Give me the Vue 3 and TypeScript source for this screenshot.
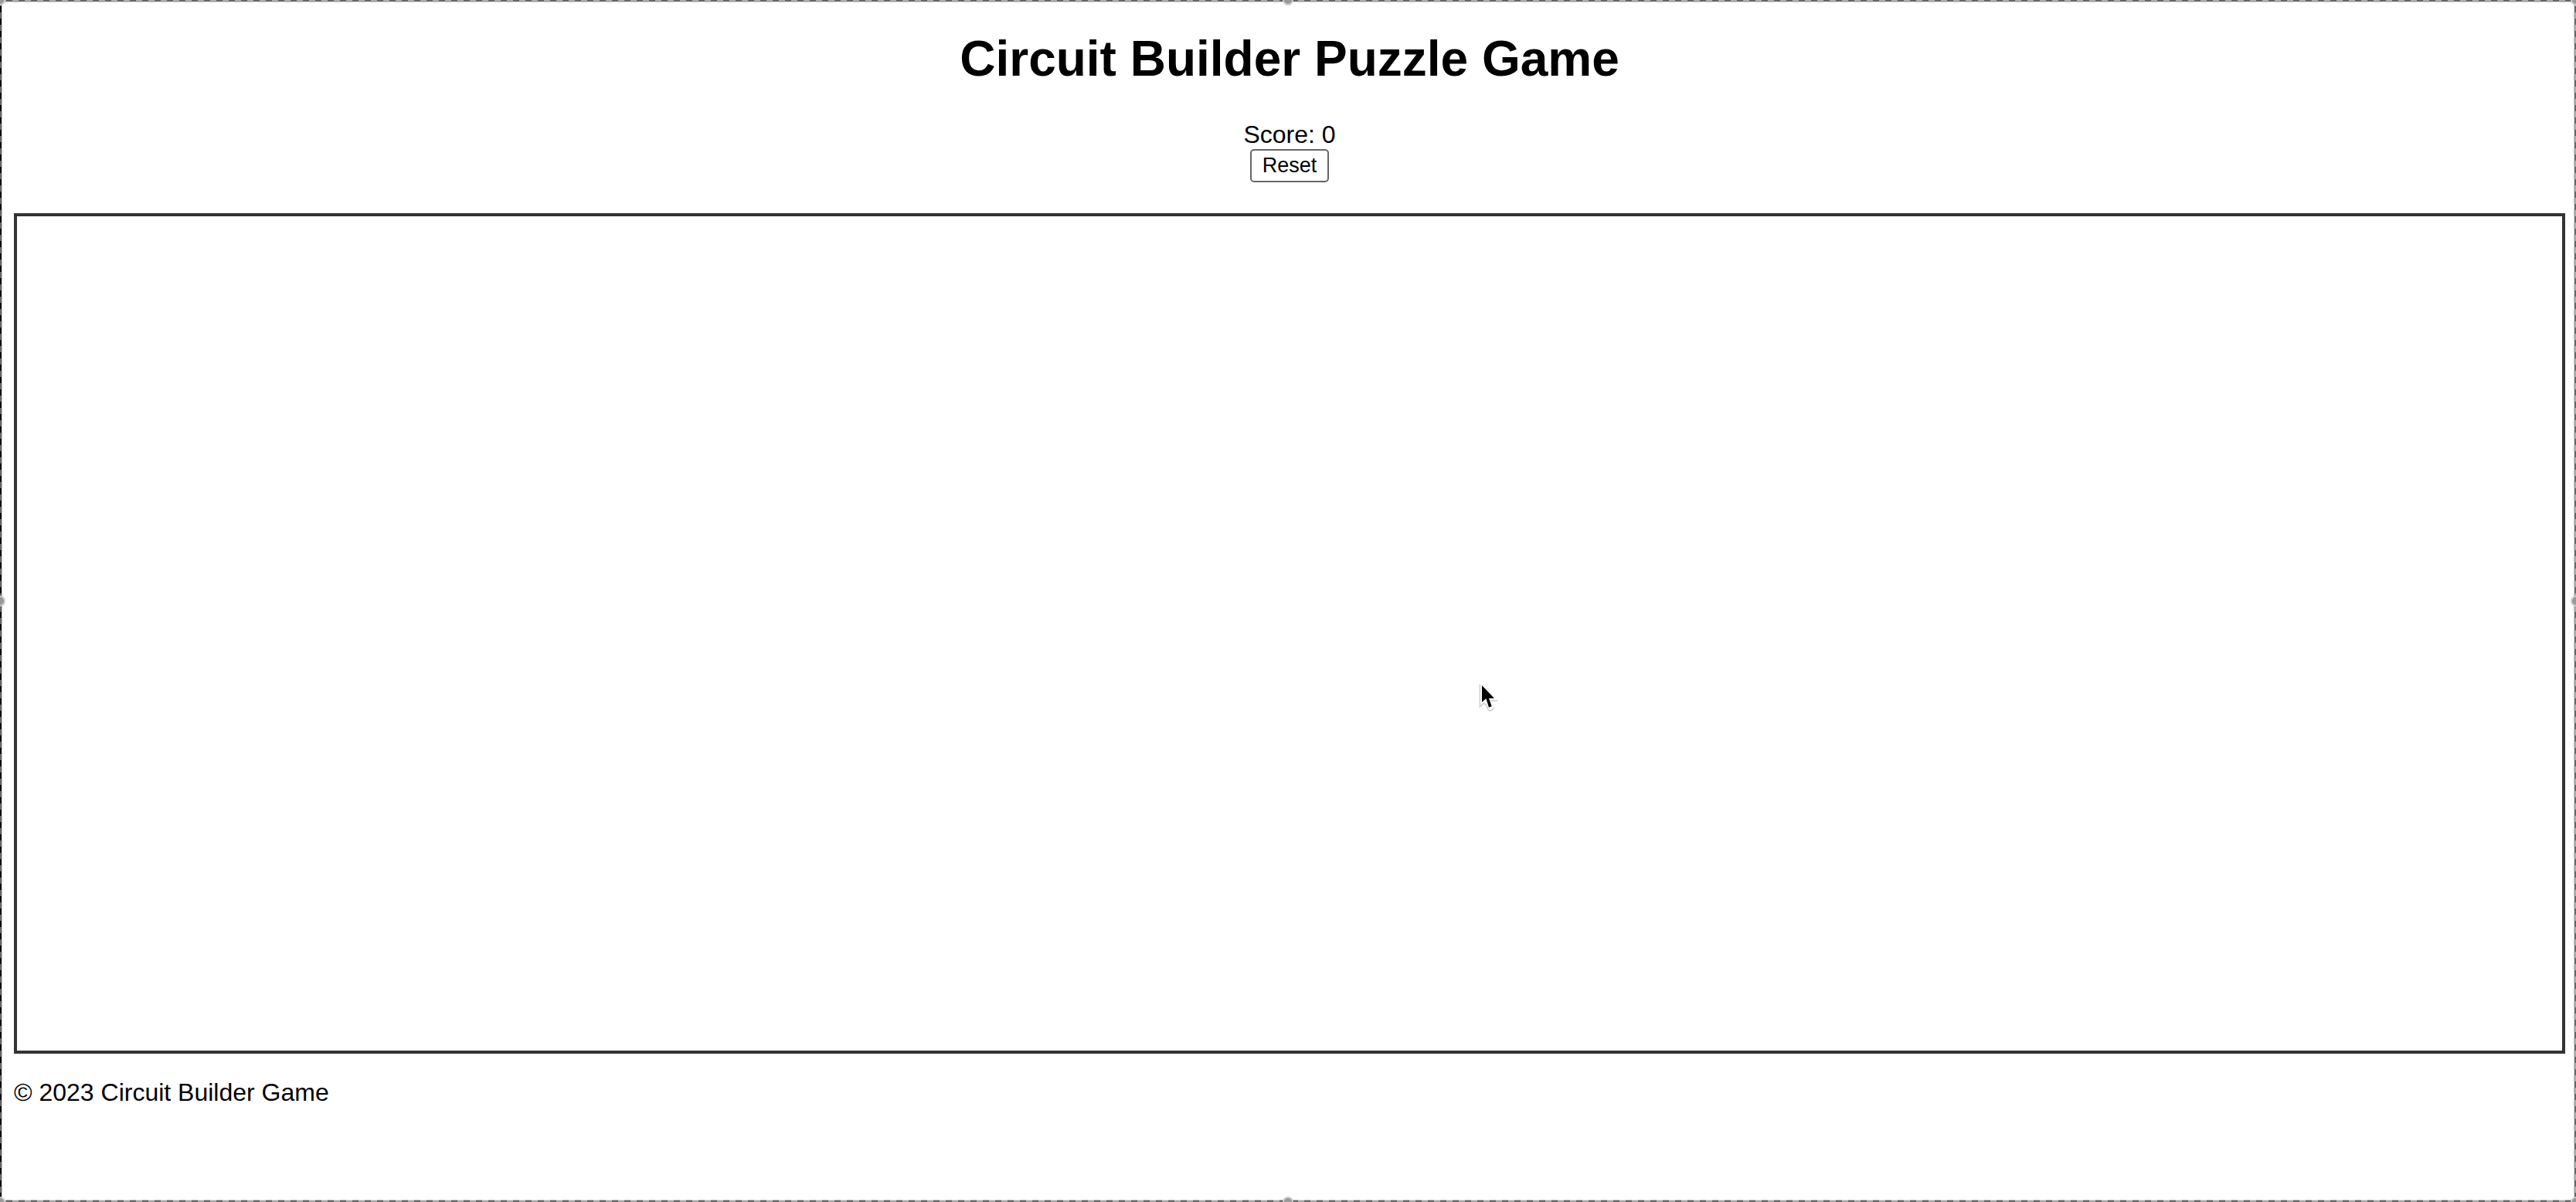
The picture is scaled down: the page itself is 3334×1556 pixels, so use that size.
<script setup lang="ts">
import { ref } from 'vue'

const score = ref<number>(0)
const edges: string[] = ['top', 'bottom', 'left', 'right']
const handles: string[] = ['nw', 'n', 'ne', 'w', 'e', 'sw', 's', 'se']

function reset(): void {
  score.value = 0
}
</script>

<template>
  <div class="page">
    <header class="header">
      <h1 class="title">Circuit Builder Puzzle Game</h1>
      <div class="score">Score: {{ score }}</div>
      <button class="reset" type="button" @click="reset">Reset</button>
    </header>
    <main class="board">
      <svg class="pointer" viewBox="72 42 81 114" aria-hidden="true">
        <path
          d="M79 48V134L95 121L103 127L111 145Q114 151 121 150Q129 149 133 138M120 112L147 111"
          fill="none"
          stroke="#d0d0d0"
          stroke-width="5"
        />
        <path d="M87 52V117L103 103L114 137L125 133L114 102H135Z" fill="#000" />
      </svg>
    </main>
    <footer class="footer">© 2023 Circuit Builder Game</footer>
    <div class="selection" aria-hidden="true">
      <span v-for="edge in edges" :key="edge" class="edge" :class="edge"></span>
      <span v-for="handle in handles" :key="handle" class="handle" :class="handle"></span>
    </div>
  </div>
</template>

<style>
body {
  margin: 0;
  background: #fff;
}
</style>

<style scoped>
.page {
  position: relative;
  box-sizing: border-box;
  display: flex;
  flex-direction: column;
  min-height: 100vh;
  padding: 39px 14px 123px 18px;
  font-family: "Liberation Sans", Arial, sans-serif;
  font-size: 32px;
  line-height: 37px;
  color: #000;
}

.header {
  display: flex;
  flex-direction: column;
  align-items: center;
}

.title {
  margin: 0 0 43px;
  font-size: 64px;
  line-height: 74px;
  font-weight: bold;
}

.reset {
  box-sizing: border-box;
  height: 43px;
  padding: 0 14px;
  border: 2px solid #666;
  border-radius: 5px;
  background: #fff;
  color: #000;
  font-family: inherit;
  font-size: 27px;
  line-height: 37px;
}

.board {
  position: relative;
  flex: 1;
  min-height: 400px;
  margin: 40px 0 32px;
  border: 4px solid #333;
}

.pointer {
  position: absolute;
  top: 55.9%;
  left: 57.4%;
  width: 27px;
  height: 38px;
}

.selection {
  position: absolute;
  inset: 0;
  overflow: hidden;
  pointer-events: none;
}

.edge {
  position: absolute;
}

.top,
.bottom {
  left: 0;
  right: 0;
  height: 3px;
}

.top {
  top: 0;
  background:
    repeating-linear-gradient(90deg, #aaa 0 8px, #666 8px 16px) 0 0 / 100% 2px no-repeat,
    repeating-linear-gradient(90deg, #bbb 0 8px, #ddd 8px 16px);
}

.bottom {
  bottom: 0;
  background:
    repeating-linear-gradient(90deg, #aaa 0 8px, #666 8px 16px) 0 100% / 100% 2px no-repeat,
    repeating-linear-gradient(90deg, #ddd 0 8px, #bbb 8px 16px);
}

.left,
.right {
  top: 0;
  bottom: 0;
  width: 3px;
}

.left {
  left: 0;
  background:
    repeating-linear-gradient(180deg, #666 0 8px, #000 8px 16px) 0 0 / 2px 100% no-repeat,
    repeating-linear-gradient(180deg, #bbb 0 8px, #ddd 8px 16px);
}

.right {
  right: 0;
  background:
    repeating-linear-gradient(180deg, #aaa 0 8px, #666 8px 16px) 100% 0 / 2px 100% no-repeat,
    repeating-linear-gradient(180deg, #bbb 0 8px, #ddd 8px 16px);
}

.handle {
  position: absolute;
  box-sizing: border-box;
  width: 14px;
  height: 14px;
  border: 2px solid #ccc;
  border-radius: 50%;
  background: #999;
  transform: translate(-50%, -50%);
}

.nw,
.n,
.ne {
  top: 0;
}

.w,
.e {
  top: 50%;
}

.sw,
.s,
.se {
  top: 100%;
}

.nw,
.w,
.sw {
  left: 0;
}

.n,
.s {
  left: 50%;
}

.ne,
.e,
.se {
  left: 100%;
}
</style>
